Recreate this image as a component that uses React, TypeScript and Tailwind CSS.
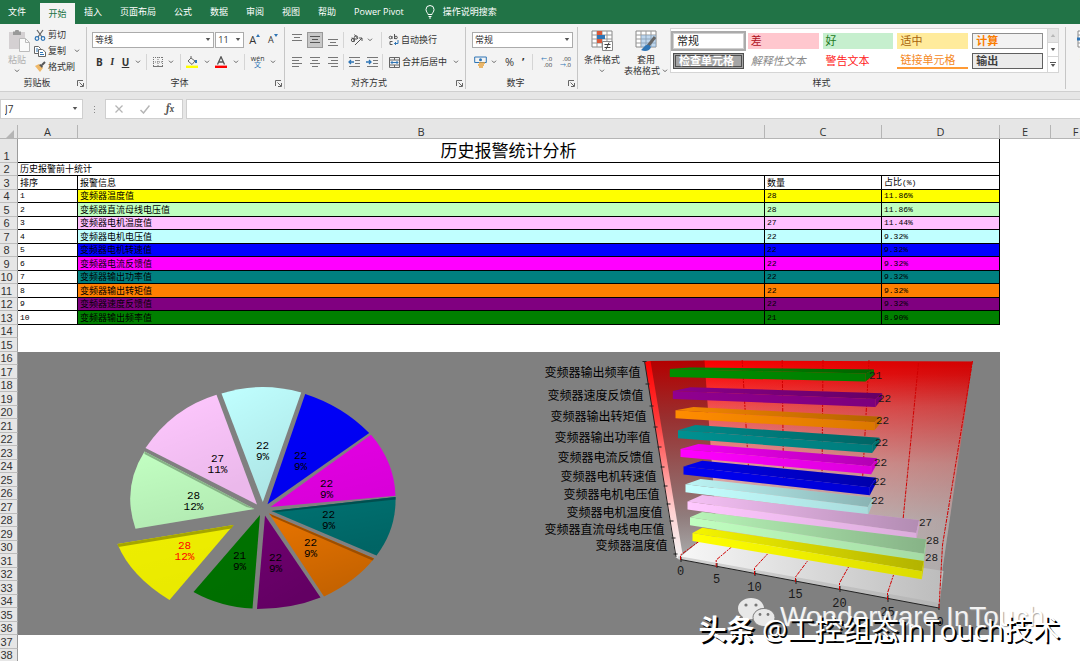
import { ReactNode } from "react";
import clsx from "clsx";

type AlarmRow = {
  name: string;
  count: number;
  ratio: string;
  bg: string;
};

const ALARMS: AlarmRow[] = [
  { name: "变频器温度值", count: 28, ratio: "11.86%", bg: "bg-[#ffff00]" },
  { name: "变频器直流母线电压值", count: 28, ratio: "11.86%", bg: "bg-[#c0ffc0]" },
  { name: "变频器电机温度值", count: 27, ratio: "11.44%", bg: "bg-[#ffc0ff]" },
  { name: "变频器电机电压值", count: 22, ratio: "9.32%", bg: "bg-[#c0ffff]" },
  { name: "变频器电机转速值", count: 22, ratio: "9.32%", bg: "bg-[#0000ff]" },
  { name: "变频器电流反馈值", count: 22, ratio: "9.32%", bg: "bg-[#ff00ff]" },
  { name: "变频器输出功率值", count: 22, ratio: "9.32%", bg: "bg-[#008080]" },
  { name: "变频器输出转矩值", count: 22, ratio: "9.32%", bg: "bg-[#ff8000]" },
  { name: "变频器速度反馈值", count: 22, ratio: "9.32%", bg: "bg-[#800080]" },
  { name: "变频器输出频率值", count: 21, ratio: "8.90%", bg: "bg-[#008000]" },
];

const TABS = ["插入", "页面布局", "公式", "数据", "审阅", "视图", "帮助", "Power Pivot"];

const CELL_STYLES = [
  { label: "常规", className: "bg-white text-[#222] outline-2 outline-[#ababab] border border-[#d0d0d0]" },
  { label: "差", className: "bg-[#ffc7ce] text-[#b0101c]" },
  { label: "好", className: "bg-[#c6efce] text-[#1e7b1e]" },
  { label: "适中", className: "bg-[#ffeb9c] text-[#a8640c]" },
  { label: "计算", className: "bg-[#f2f2f2] text-[#fa7d00] font-bold border border-[#8f8f8f]" },
  { label: "检查单元格", className: "bg-[#a5a5a5] text-white font-bold border-3 border-double border-[#4f4f4f]" },
  { label: "解释性文本", className: "text-[#8a8a8a] italic" },
  { label: "警告文本", className: "text-[#ff2020]" },
  { label: "链接单元格", className: "text-[#f58a1f] border-b-2 border-[#ff9a35]" },
  { label: "输出", className: "bg-[#ebebeb] text-[#3f3f3f] font-bold border border-[#5f5f5f]" },
];

function Chevron() {
  return (
    <svg viewBox="0 0 6 4" className="h-1 w-1.5 shrink-0" fill="none" stroke="#666">
      <path d="M1 .7 3 2.7 5 .7" />
    </svg>
  );
}

function Caret({ className }: { className?: string }) {
  return (
    <svg viewBox="0 0 6 4" className={clsx("h-[3px] w-1.5", className)} fill="#555">
      <path d="M0 0h6L3 4z" />
    </svg>
  );
}

function Divider() {
  return <span className="h-4 w-px shrink-0 bg-[#d5d5d5]" />;
}

function SelectBox({ label, value, className }: { label: string; value: string; className: string }) {
  return (
    <div className={clsx("relative h-4 border border-[#ababab] bg-white", className)}>
      <select aria-label={label} className="block h-full w-full appearance-none pl-0.5 text-[9px] leading-[14px] text-[#333]">
        <option>{value}</option>
      </select>
      <Caret className="pointer-events-none absolute top-[5px] right-0.5" />
    </div>
  );
}

function RibbonGroup({
  title,
  launcher = true,
  className,
  children,
}: {
  title: string;
  launcher?: boolean;
  className?: string;
  children: ReactNode;
}) {
  return (
    <section className={clsx("flex h-[62px] flex-col border-r border-[#c6c6c6]", className)}>
      <div className="h-[50px] grow">{children}</div>
      <div className={clsx("relative h-3 text-center text-[9px] leading-3", launcher && "pr-3")}>
        {title}
        {launcher && (
          <button aria-label={title + "设置"} className="absolute right-0.5 bottom-0.5">
            <svg viewBox="0 0 7 7" className="size-[7px]" fill="none" stroke="#666">
              <path d="M.5 6V.5H6M2.500 2.500 6 6M6.500 3v3.500H3" />
            </svg>
          </button>
        )}
      </div>
    </section>
  );
}

/** Horizontal lines used by the alignment buttons, as [x1, x2] pairs. */
function LinesIcon({ lines, top = 1, color = "#777" }: { lines: number[][]; top?: number; color?: string }) {
  return (
    <svg viewBox="0 0 12 12" className="size-3" stroke={color}>
      {lines.map(([a, b], i) => (
        <path key={i} d={`M${a} ${top + i * 3 + 0.5}H${b}`} />
      ))}
    </svg>
  );
}

function IndentIcon({ right }: { right?: boolean }) {
  return (
    <svg viewBox="0 0 12 12" className="size-3" fill="none" stroke="#777">
      <path d="M1 1.500h11M7 4.500h5M7 7.500h5M1 10.500h11" />
      <path d={right ? "M0 6h5M3 4l2 2-2 2" : "M6 6H1M3 4 1 6l2 2"} stroke="#2e75b6" strokeWidth="1.300" />
    </svg>
  );
}

function ClipboardGroup() {
  return (
    <RibbonGroup title="剪贴板" className="w-[87px]">
      <div className="flex">
        <button className="flex w-[34px] flex-col items-center pt-[3px] text-[9px] leading-[11px] text-[#b0b0b0]">
          <svg viewBox="0 0 22 22" className="ml-1 size-[22px]">
            <path d="M1 2h16v17H1z" fill="#d4d0d2" />
            <path d="M5 1.500h2a2 2 0 0 1 4 0h2V5H5z" fill="#999" />
            <path d="M11.500 8.500h6l4 4v9h-10z" fill="#fafafa" stroke="#bbb" />
            <path d="M17.500 8.500v4h4" fill="none" stroke="#bbb" />
          </svg>
          <span className="pt-0.5 pb-1">粘贴</span>
          <Chevron />
        </button>
        <div className="flex flex-col text-[9px] leading-4">
          <button className="flex items-center gap-0.5">
            <svg viewBox="0 0 12 12" className="size-3" fill="none" stroke="#666" strokeWidth="1.200">
              <path d="M3 1l5 7M9 1 4 8" />
              <circle cx="3" cy="9.500" r="1.800" stroke="#2e75b6" />
              <circle cx="9" cy="9.500" r="1.800" stroke="#2e75b6" />
            </svg>
            剪切
          </button>
          <button className="flex items-center gap-0.5">
            <svg viewBox="0 0 12 12" className="size-3" fill="#fff" stroke="#666">
              <path d="M.5 1.500h4l2 2v5h-6z" />
              <path d="M4.500 4.500h4l3 2.500v4.500h-7z" />
              <path d="M6 7.500h3M6 9.500h4M2 4h2M2 6h2" stroke="#2e75b6" />
            </svg>
            复制
            <span className="pl-1.5">
              <Chevron />
            </span>
          </button>
          <button className="flex items-center gap-0.5">
            <svg viewBox="0 0 12 12" className="size-3">
              <path d="M1 5l4-2 4 4-3 4z" fill="#efb868" />
              <path d="M5 4l2-1 2 2-1 2z" fill="#555" />
              <path d="M8 4l3-3" stroke="#555" strokeWidth="2" />
            </svg>
            格式刷
          </button>
        </div>
      </div>
    </RibbonGroup>
  );
}

function FontGroup() {
  return (
    <RibbonGroup title="字体" className="w-[198px]">
      <div className="flex flex-col gap-1.5 pt-[5px] pl-[5px]">
        <div className="flex items-center gap-px">
          <SelectBox label="字体" value="等线" className="w-[123px]" />
          <SelectBox label="字号" value="11" className="w-[29px]" />
          <button aria-label="增大字号" className="ml-1 flex w-4 text-[11px] leading-4">
            A
            <svg viewBox="0 0 4 3" className="mt-0.5 h-[3px] w-1" fill="#2e75b6">
              <path d="M0 3h4L2 0z" />
            </svg>
          </button>
          <button aria-label="减小字号" className="ml-0.5 flex w-4 text-[9px] leading-4">
            A
            <svg viewBox="0 0 4 3" className="mt-0.5 h-[3px] w-1" fill="#2e75b6">
              <path d="M0 0h4L2 3z" />
            </svg>
          </button>
        </div>
        <div className="flex h-4 items-center justify-between pr-2 pl-1 text-[10px]">
          <button className="font-bold">B</button>
          <button className="w-2 font-serif font-bold italic">I</button>
          <button className="font-bold underline">U</button>
          <Chevron />
          <Divider />
          <button aria-label="边框">
            <svg viewBox="0 0 10 10" className="size-2.5" fill="none" stroke="#777">
              <path d="M.5 0v10M5 0v10M9.500 0v10M0 .5h10M0 5h10" strokeDasharray="1 1" />
              <path d="M0 9.500h10" />
            </svg>
          </button>
          <Chevron />
          <Divider />
          <button aria-label="填充颜色">
            <svg viewBox="0 0 12 12" className="size-3" fill="none" stroke="#666">
              <path d="M2 5l3-3 4 3-3 3.500zM5 2V0" />
              <path d="M10 4v3" stroke="#2e75b6" strokeWidth="2" />
              <path d="M0 10.800h12" stroke="#ff0" strokeWidth="2.400" />
            </svg>
          </button>
          <Chevron />
          <button aria-label="字体颜色">
            <svg viewBox="0 0 12 12" className="size-3" fill="none" stroke="#555">
              <path d="M2.500 8.500 6 .8l3.500 7.700M4 6h4" strokeWidth="1.300" />
              <path d="M0 10.800h12" stroke="#f00" strokeWidth="2.400" />
            </svg>
          </button>
          <Chevron />
          <Divider />
          <button className="flex flex-col items-center text-[7px] leading-[6px]">
            wén
            <span className="text-[#2e75b6]">文</span>
          </button>
          <Chevron />
        </div>
      </div>
    </RibbonGroup>
  );
}

function AlignGroup() {
  const buttons = "grid size-4 place-items-center";
  return (
    <RibbonGroup title="对齐方式" className="w-[181px]">
      <div className="flex flex-col gap-1.5 pt-[5px] pl-1 text-[9px]">
        <div className="flex h-4 items-center gap-0.5">
          <button aria-label="顶端对齐" className={buttons}>
            <LinesIcon top={0} lines={[[1, 11], [3, 9], [1, 11]]} />
          </button>
          <button aria-label="垂直居中" className={clsx(buttons, "border border-[#999] bg-[#c8c8c8]")}>
            <LinesIcon top={2} lines={[[1, 11], [3, 9], [1, 11]]} color="#555" />
          </button>
          <button aria-label="底端对齐" className={buttons}>
            <LinesIcon top={5} lines={[[1, 11], [3, 9], [1, 11]]} />
          </button>
          <Divider />
          <button aria-label="方向" className="ml-1 flex items-center gap-1">
            <svg viewBox="0 0 13 12" className="h-3 w-[13px]" fill="none" stroke="#555">
              <circle cx="3" cy="6" r="1.700" />
              <circle cx="6" cy="3.500" r="1.700" />
              <path d="M4.500 7.500 2 3.500M8 5 4.500.5M5 11l7-7M12 7V4H9" />
            </svg>
            <Chevron />
          </button>
          <span className="ml-1.5 h-4 w-px bg-[#d5d5d5]" />
          <button className="ml-1 flex items-center gap-0.5">
            <svg viewBox="0 0 10 12" className="h-3 w-[11px]" fill="none" stroke="#555">
              <circle cx="2" cy="3.500" r="1.300" />
              <path d="M3.500 2v3M6 0v5M4 7.500H1.500v3H4" />
              <circle cx="7.500" cy="3.500" r="1.300" />
              <path d="M9.500 6v3.500H6M7.500 8 6 9.500 7.500 11" stroke="#2e75b6" />
            </svg>
            自动换行
          </button>
        </div>
        <div className="flex h-4 items-center gap-0.5">
          <button aria-label="左对齐" className={buttons}>
            <LinesIcon lines={[[1, 11], [1, 8], [1, 11], [1, 8]]} />
          </button>
          <button aria-label="居中" className={buttons}>
            <LinesIcon lines={[[1, 11], [3, 9], [1, 11], [3, 9]]} />
          </button>
          <button aria-label="右对齐" className={buttons}>
            <LinesIcon lines={[[1, 11], [4, 11], [1, 11], [4, 11]]} />
          </button>
          <Divider />
          <button aria-label="减少缩进量" className={buttons}>
            <IndentIcon />
          </button>
          <button aria-label="增加缩进量" className={buttons}>
            <IndentIcon right />
          </button>
          <Divider />
          <button className="ml-1 flex items-center gap-0.5">
            <svg viewBox="0 0 11 11" className="size-[11px]" fill="none" stroke="#666">
              <path d="M.5.5h10v10H.5zM0 3h11M0 8h11M5.500 0v3M5.500 8v3" />
              <path d="M2 5.500h7M3.500 4 2 5.500 3.500 7M7.500 4 9 5.500 7.500 7" stroke="#2e75b6" />
            </svg>
            合并后居中
            <span className="pl-1">
              <Chevron />
            </span>
          </button>
        </div>
      </div>
    </RibbonGroup>
  );
}

function NumberGroup() {
  return (
    <RibbonGroup title="数字" className="w-[112px]">
      <div className="flex flex-col gap-1.5 pt-[5px] pr-1 pl-1.5">
        <SelectBox label="数字格式" value="常规" className="w-full" />
        <div className="flex h-4 items-center justify-between px-0.5">
          <button aria-label="会计数字格式" className="flex items-center gap-1">
            <svg viewBox="0 0 13 12" className="h-3 w-[13px]" fill="none">
              <path d="M.7 1h11.600v5.500H.7z" stroke="#2e75b6" />
              <circle cx="6.500" cy="3.700" r="1.500" fill="#2e75b6" />
              <path d="M5 7h6M4 9h6M5 11h4" stroke="#e8a33d" strokeWidth="1.600" />
            </svg>
            <Chevron />
          </button>
          <button className="text-[11px]">%</button>
          <button className="text-[11px] font-bold">’</button>
          <Divider />
          <button className="flex flex-col text-right text-[6px] leading-[6px]">
            <span>
              <span className="text-[#2e75b6]">←</span>.0
            </span>
            <span>.00</span>
          </button>
          <button className="flex flex-col text-right text-[6px] leading-[6px]">
            <span>.00</span>
            <span>
              <span className="text-[#2e75b6]">→</span>.0
            </span>
          </button>
        </div>
      </div>
    </RibbonGroup>
  );
}

function GridIconBase() {
  return (
    <>
      <path d="M1 1h20v16H1z" fill="#fff" stroke="#888" />
      <path d="M1 5h20M1 9h20M1 13h20M6 1v16M11 1v16M16 1v16" fill="none" stroke="#999" />
    </>
  );
}

function StylesGroup() {
  return (
    <RibbonGroup title="样式" launcher={false} className="grow">
      <div className="flex">
        <button className="flex w-12 shrink-0 flex-col items-center pt-[3px] text-[9px] leading-[11px]">
          <svg viewBox="0 0 22 22" className="size-[22px]">
            <GridIconBase />
            <path d="M6 1h5v4H6zM6 9h5v4H6z" fill="#d9593a" />
            <path d="M6 5h8v4H6z" fill="#2e75b6" />
            <path d="M11.500 11.500h10v9h-10z" fill="#fff" stroke="#888" />
            <path d="M13.500 14.500h6M13.500 17.500h6M18 12.500l-3 7" stroke="#444" />
          </svg>
          <span className="pt-0.5 pb-1">条件格式</span>
          <Chevron />
        </button>
        <button className="flex w-10 shrink-0 flex-col items-center pt-[3px] text-[9px] leading-[11px]">
          <svg viewBox="0 0 22 22" className="size-[22px]">
            <GridIconBase />
            <path d="M6 5h15v12H6z" fill="#7fb0dd" opacity=".5" />
            <path d="M20 7l-7 9" stroke="#666" strokeWidth="3" />
            <path d="M14 15c-4-1-5 3-8 5 4 2 9 1 10-3z" fill="#2e75b6" />
          </svg>
          <span className="pt-0.5">套用</span>
          <span className="flex items-center gap-0.5 whitespace-nowrap">
            表格格式
            <Chevron />
          </span>
        </button>
        <div className="mt-px mr-1.5 ml-1 flex h-[45px] grow border border-[#d5d5d5] bg-white">
          <div className="grid grow grid-cols-5 gap-x-1 gap-y-1 px-0.5 py-1 pr-1">
            {CELL_STYLES.map((s) => (
              <button
                key={s.label}
                className={clsx("flex h-4 items-center pl-[3px] text-left text-[11px] leading-[14px]", s.className)}
              >
                {s.label}
              </button>
            ))}
          </div>
          <div className="flex w-[11px] flex-col divide-y divide-[#d5d5d5] border-l border-[#d5d5d5]">
            <button aria-label="上一行" className="grid grow place-items-center bg-[#e4e4e4]">
              <Caret className="w-1 rotate-180 opacity-30" />
            </button>
            <button aria-label="下一行" className="grid grow place-items-center">
              <Caret className="w-1" />
            </button>
            <button aria-label="其他" className="flex grow flex-col items-center justify-center gap-px">
              <span className="h-px w-1.5 bg-[#555]" />
              <Caret className="w-1.5" />
            </button>
          </div>
        </div>
      </div>
    </RibbonGroup>
  );
}

function Ribbon() {
  return (
    <header>
      <nav className="flex h-6 items-stretch bg-[#217346] text-[9px] leading-6 text-white">
        <button className="w-10 pl-2 text-left">文件</button>
        <button className="mt-[3px] w-[35px] bg-[#f3f3f3] leading-[21px] text-[#217346]">开始</button>
        {TABS.map((tab) => (
          <button key={tab} className="px-[9px]">
            {tab}
          </button>
        ))}
        <button className="flex items-center gap-2 pl-3">
          <svg viewBox="0 0 10 14" className="h-3.5 w-2.5" fill="none" stroke="#fff">
            <path d="M3 9.500C3 8 1 7 1 4.500a4 4 0 0 1 8 0C9 7 7 8 7 9.500zM3.500 11.500h3M4 13h2" />
          </svg>
          操作说明搜索
        </button>
      </nav>
      <div className="flex h-[68px] border-b border-[#cfcfcf] bg-[#f3f3f3] pt-[3px]">
        <ClipboardGroup />
        <FontGroup />
        <AlignGroup />
        <NumberGroup />
        <StylesGroup />
        <div className="w-3.5 overflow-hidden pt-[3px]">
          <button className="ml-[11px] block w-6">
            <svg viewBox="0 0 22 22" className="size-[22px]">
              <GridIconBase />
              <path d="M0 9h6" stroke="#2e75b6" strokeWidth="3" />
            </svg>
            <span className="block text-[9px] leading-[13px]">插入</span>
          </button>
        </div>
      </div>
    </header>
  );
}

function FormulaBar() {
  return (
    <div className="flex h-[33px] items-start pt-[7px]">
      <div className="relative h-5 w-[83px] border border-[#cfcfcf] bg-white">
        <input aria-label="名称框" defaultValue="J7" className="block h-full w-full pl-1 text-[10px]" />
        <Caret className="absolute top-[7px] right-1" />
      </div>
      <div className="flex h-5 w-[22px] flex-col items-center justify-center gap-0.5">
        <span className="size-px bg-[#888]" />
        <span className="size-px bg-[#888]" />
        <span className="size-px bg-[#888]" />
      </div>
      <div className="flex h-5 w-[78px] items-center justify-between border border-[#cfcfcf] bg-white px-2">
        <button aria-label="取消">
          <svg viewBox="0 0 10 10" className="size-2.5" stroke="#b5b5b5" strokeWidth="1.300">
            <path d="M1.500 1.500l7 7M8.500 1.500l-7 7" />
          </svg>
        </button>
        <button aria-label="输入">
          <svg viewBox="0 0 10 10" className="size-2.5" fill="none" stroke="#b5b5b5" strokeWidth="1.500">
            <path d="M.5 6l3 3L9.500 1.500" />
          </svg>
        </button>
        <button className="font-serif text-[11px] leading-4 font-bold text-[#555] italic">
          f<span className="text-[9px]">x</span>
        </button>
      </div>
      <input aria-label="编辑栏" className="ml-[3px] h-5 grow border border-r-0 border-[#cfcfcf] bg-white px-1 text-[9px]" />
    </div>
  );
}

const PIE_SLICES = [
  { d: "M262.300 502 221 393.500Q260 381 300.700 392.500Z", fill: "#c0ffff", shade: 0.1, label: "22", pct: "9%", x: 262, y: 449 },
  { d: "M267 504.300 304.700 394Q342 406 368.700 433Z", fill: "#0000fa", shade: 0.05, label: "22", pct: "9%", x: 300, y: 459 },
  { d: "M270 507 370.500 434.700Q394 462 395 495.700Z", fill: "#e400e4", shade: 0.05, label: "22", pct: "9%", x: 326, y: 487 },
  { d: "M271 511 395 497Q396 529 376 555.500Z", fill: "#007272", shade: 0.12, label: "22", pct: "9%", x: 328, y: 518 },
  { d: "M268.500 513.500 373.500 558.500Q356 581 323.500 596.500Z", fill: "#e87400", shade: 0.15, label: "22", pct: "9%", x: 310, y: 546 },
  { d: "M264.500 515.500 320 597.500Q291 609 256.500 609Z", fill: "#700070", shade: 0.12, label: "22", pct: "9%", x: 275, y: 561 },
  { d: "M259.500 515 252 608.500Q220 607 193 592Z", fill: "#007400", shade: 0.05, label: "21", pct: "9%", x: 239, y: 559 },
  { d: "M233 525 117 544Q130 576 169 600Z", fill: "#eeee00", shade: 0.02, label: "28", pct: "12%", x: 184, y: 549 },
  { d: "M254 509 144 451.500Q121 488 135 528.700Z", fill: "#c2ffc2", shade: 0.08, label: "28", pct: "12%", x: 193, y: 499 },
  { d: "M256.500 504.500 216 394.700Q172 408 145 448Z", fill: "#ffc8ff", shade: 0.08, label: "27", pct: "11%", x: 217, y: 462 },
];

// Sides of the slices that face the viewer.
const PIE_EDGES = [
  { d: "M144 451.500 254 509 246 507 144 454Z", fill: "#86b286" },
  { d: "M117 544 233 525 231 528.500 118 547Z", fill: "#a5a500" },
  { d: "M271 511 395 497V499.500L277 512Z", fill: "#004f4f" },
  { d: "M268.500 513.500 373.500 558.500 372 560.500 272 517Z", fill: "#9c4e00" },
];

function PieChart() {
  return (
    <svg viewBox="18 352 490 283" className="h-[283px] min-w-0 flex-1" role="img" aria-label="报警占比饼图">
      <defs>
        <linearGradient id="pieShade" x1="0" y1="0" x2="0.4" y2="1">
          <stop offset="0" stopOpacity="0" />
          <stop offset="1" stopOpacity="1" />
        </linearGradient>
      </defs>
      {PIE_SLICES.map((s) => (
        <g key={s.d}>
          <path d={s.d} fill={s.fill} />
          <path d={s.d} fill="url(#pieShade)" opacity={s.shade} />
        </g>
      ))}
      {PIE_EDGES.map((e) => (
        <path key={e.d} d={e.d} fill={e.fill} />
      ))}
      <g className="font-['Liberation_Mono',monospace] text-[11px]" textAnchor="middle">
        {PIE_SLICES.map((s) => (
          <g key={s.d} fill={s.x === 184 ? "#ff0000" : "#000"}>
            <text x={s.x} y={s.y}>{s.label}</text>
            <text x={s.x} y={s.y + 11}>{s.pct}</text>
          </g>
        ))}
      </g>
    </svg>
  );
}

// left: x and top of the front face; back: far left corner of the top face;
// end: far right corner; front: lower right corner of the front face.
const BARS = [
  { name: "变频器输出频率值", tx: 640, ty: 377, color: "#009000", left: [669.3, 369], back: [690, 367.5], end: [873.5, 369.5], front: [865, 381.5], value: 21, vx: 875, vy: 379 },
  { name: "变频器速度反馈值", tx: 643, ty: 400, color: "#900090", left: [672.3, 391], back: [690, 387.3], end: [881.7, 393.3], front: [875, 407], value: 22, vx: 884, vy: 402 },
  { name: "变频器输出转矩值", tx: 646, ty: 421, color: "#ff8c00", left: [675, 410.3], back: [693, 407], end: [881, 416.7], front: [874, 430.3], value: 22, vx: 882, vy: 424 },
  { name: "变频器输出功率值", tx: 650, ty: 442, color: "#009090", left: [677.5, 430.3], back: [695, 425], end: [879, 437.7], front: [871.7, 453], value: 22, vx: 881, vy: 446 },
  { name: "变频器电流反馈值", tx: 653, ty: 462, color: "#ff00ff", left: [680, 449], back: [698, 444], end: [876.7, 458.3], front: [870.7, 474.3], value: 22, vx: 880, vy: 466 },
  { name: "变频器电机转速值", tx: 656, ty: 481, color: "#0000f4", left: [683, 466.5], back: [701.7, 460.7], end: [875.7, 477.7], front: [869.3, 495.3], value: 22, vx: 879, vy: 485 },
  { name: "变频器电机电压值", tx: 659, ty: 499, color: "#c4ffff", left: [685, 484.3], back: [700, 479], end: [872.7, 497.7], front: [867.3, 515], value: 22, vx: 877, vy: 504 },
  { name: "变频器电机温度值", tx: 662, ty: 517, color: "#ffc8ff", left: [687, 501.5], back: [701.7, 495], end: [918.7, 520], front: [915.7, 541], value: 27, vx: 925, vy: 526 },
  { name: "变频器直流母线电压值", tx: 664, ty: 534, color: "#c0ffc0", left: [689.5, 517.3], back: [701.7, 512], end: [925.7, 539.3], front: [923.3, 561.7], value: 28, vx: 932, vy: 544 },
  { name: "变频器温度值", tx: 667, ty: 550, color: "#ffff00", left: [692, 533], back: [701.7, 527.7], end: [923.3, 561], front: [921.3, 579.3], value: 28, vx: 931, vy: 561 },
];

const AXIS_TICKS = [
  { value: 0, x: 680, y: 575 },
  { value: 5, x: 716, y: 583 },
  { value: 10, x: 754, y: 591 },
  { value: 15, x: 795, y: 598 },
  { value: 20, x: 839, y: 607 },
  { value: 25, x: 887, y: 616 },
  { value: 30, x: 936, y: 626 },
];

const GRID_LINES = [
  "M741.700 360 748 468",
  "M781.700 360 783 478",
  "M822.500 360 821.500 478",
  "M868.500 360 862 480",
  "M918 363 902.500 520",
  "M972 361 942 545 938.500 608",
  "M680 560V555L699 541",
  "M715.700 567V560L731 547",
  "M754 575V568L767 554",
  "M795 582V577L807 561",
  "M839 590V583L848 567",
  "M887 600V593L893 575",
];

function Bar3D({ bar }: { bar: (typeof BARS)[number] }) {
  const [lx, ly] = bar.left;
  const [bx, by] = bar.back;
  const [ex, ey] = bar.end;
  const [fx, fy] = bar.front;
  const top = `M${lx} ${ly}L${bx} ${by}L${ex} ${ey}L${fx} ${fy - 8}Z`;
  const side = `M${fx} ${fy - 8}L${ex} ${ey}V${ey + 5}L${fx} ${fy}Z`;
  const face = `M${lx} ${ly}L${fx} ${fy - 8}V${fy}L${lx} ${ly + 8}Z`;
  return (
    <g>
      <path d={top} fill={bar.color} />
      <path d={top} fill="url(#barTop)" />
      <path d={side} fill={bar.color} />
      <path d={side} fillOpacity=".2" />
      <path d={face} fill={bar.color} />
      <path d={face} fill="url(#barFace)" />
    </g>
  );
}

function BarChart() {
  return (
    <svg viewBox="509 352 490 283" className="h-[283px] min-w-0 flex-1" role="img" aria-label="报警次数条形图">
      <defs>
        <linearGradient id="barTop">
          <stop offset="0" stopOpacity=".04" />
          <stop offset="1" stopOpacity=".3" />
        </linearGradient>
        <linearGradient id="barFace">
          <stop offset="0" stopOpacity="0" />
          <stop offset="1" stopOpacity=".14" />
        </linearGradient>
        <linearGradient id="wallEdge" x1="0" y1="0" x2="0" y2="1">
          <stop offset="0" stopColor="#ff0000" />
          <stop offset=".3" stopColor="#ff3a3a" />
          <stop offset=".75" stopColor="#ffd0d0" />
          <stop offset="1" stopColor="#f4f4f4" />
        </linearGradient>
        <linearGradient id="wallSide" x1="0" y1="0" x2="0" y2="1">
          <stop offset="0" stopColor="#b40000" />
          <stop offset=".3" stopColor="#983030" />
          <stop offset=".8" stopColor="#907c7c" />
          <stop offset="1" stopColor="#a8a8a8" />
        </linearGradient>
        <linearGradient id="wallBack" x1="0" y1="0" x2="0" y2="1">
          <stop offset="0" stopColor="#fa0000" />
          <stop offset=".06" stopColor="#fa1010" />
          <stop offset=".2" stopColor="#f25050" />
          <stop offset=".45" stopColor="#e29a98" />
          <stop offset=".7" stopColor="#d0c0c0" />
          <stop offset="1" stopColor="#cacaca" />
        </linearGradient>
        <linearGradient id="wallShade">
          <stop offset="0" stopOpacity="0" />
          <stop offset="1" stopOpacity=".16" />
        </linearGradient>
        <linearGradient id="floor">
          <stop offset="0" stopColor="#f8f8f8" />
          <stop offset="1" stopColor="#bcbcbc" />
        </linearGradient>
      </defs>
      <path d="M703 360.500 972 361.500 939 590 712 560Z" fill="url(#wallBack)" />
      <path d="M703 360.500 972 361.500 939 590 712 560Z" fill="url(#wallShade)" />
      <path d="M649 361 704 360.500 717 543 698 542 680 555Z" fill="url(#wallSide)" />
      <path d="M644 361.500 650 361 682 554 678 559 675 557Z" fill="url(#wallEdge)" />
      <path d="M677 559 699 541 760 543 943 571 938.500 608Z" fill="url(#floor)" />
      <path d="M678 556 938.500 603V608L677 559Z" fill="#aaa" fillOpacity=".45" />
      <path d="M644 361 675.500 557M680 559.500 938.500 608M642 361.500h4M645 384h4M649 406h4M653 427h4M657 447h4M660 467h4M663 486h4M666 504h4M669 521h4M671 538h4M673 554h4M680.500 557v5M716.500 563v5M754.500 571v5M795.500 579v5M839.500 586v6M887.500 595v7M938.500 604v6" fill="none" stroke="#222" />
      <g fill="none" stroke="#d00000" strokeDasharray="4 1 2 1">
        {GRID_LINES.map((d) => (
          <path key={d} d={d} />
        ))}
      </g>
      {BARS.map((bar) => (
        <Bar3D key={bar.name} bar={bar} />
      ))}
      <g className="text-[12px]" textAnchor="end">
        {BARS.map((bar) => (
          <text key={bar.name} x={bar.tx} y={bar.ty}>{bar.name}</text>
        ))}
      </g>
      <g className="font-['Liberation_Mono',monospace]" fill="#1a1a1a" textAnchor="middle">
        {BARS.map((bar) => (
          <text key={bar.name} x={bar.vx} y={bar.vy} className="text-[11px]">{bar.value}</text>
        ))}
        {AXIS_TICKS.map((t) => (
          <text key={t.value} x={t.x} y={t.y} className="text-[12px]">{t.value}</text>
        ))}
      </g>
    </svg>
  );
}

function RowHead({ n }: { n: number }) {
  return (
    <th
      scope="row"
      className={clsx(
        "overflow-hidden border-r border-b border-r-[#9b9b9b] border-b-[#bdbdbd] bg-[#e6e6e6] pr-1 text-center align-bottom font-['Liberation_Sans',sans-serif] text-[11px] leading-3 font-normal text-[#333]",
        n === 1 ? "h-[24px]" : n % 2 === 0 ? "h-[13px]" : "h-[14px]"
      )}
    >
      {n}
    </th>
  );
}

function Sheet() {
  const cell = "overflow-hidden border-r border-b border-black pl-0.5 text-left leading-3 font-normal whitespace-nowrap";
  const words = "text-[9px]";
  const digits = "font-['Liberation_Mono','Noto_Sans_CJK_SC',monospace] text-[8px]";
  const colHead = "border-r border-[#b5b5b5] border-b h-[14px] text-[11px] leading-[13px] font-normal text-[#333] bg-[#e6e6e6]";

  return (
    <table className="w-full table-fixed border-separate border-spacing-0 bg-white">
      <colgroup>
        <col className="w-[18px]" />
        <col className="w-[60px]" />
        <col />
        <col className="w-[117px]" />
        <col className="w-[118px]" />
        <col className="w-[51px]" />
        <col className="w-[29px]" />
      </colgroup>
      <thead>
        <tr>
          <th aria-label="全选" className={colHead}>
            <svg viewBox="0 0 8 8" className="mt-1 ml-1.5 size-2" fill="#b5b5b5">
              <path d="M8 0v8H0z" />
            </svg>
          </th>
          <th className={colHead}>A</th>
          <th className={colHead}>B</th>
          <th className={colHead}>C</th>
          <th className={colHead}>D</th>
          <th className={colHead}>E</th>
          <th className={clsx(colHead, "border-r-0 pl-5")}>F</th>
        </tr>
      </thead>
      <tbody>
        <tr>
          <RowHead n={1} />
          <td colSpan={4} className="border-r border-b border-black text-center text-[17px] leading-[22px]">
            历史报警统计分析
          </td>
        </tr>
        <tr>
          <RowHead n={2} />
          <td colSpan={4} className={clsx(cell, words)}>历史报警前十统计</td>
        </tr>
        <tr>
          <RowHead n={3} />
          <td className={clsx(cell, words)}>排序</td>
          <td className={clsx(cell, words)}>报警信息</td>
          <td className={clsx(cell, words)}>数量</td>
          <td className={clsx(cell, words)}>
            占比<span className={digits}>(%)</span>
          </td>
        </tr>
        {ALARMS.map((row, i) => (
          <tr key={row.name}>
            <RowHead n={i + 4} />
            <td className={clsx(cell, digits)}>{i + 1}</td>
            <td className={clsx(cell, words, row.bg)}>{row.name}</td>
            <td className={clsx(cell, digits, row.bg)}>{row.count}</td>
            <td className={clsx(cell, digits, row.bg)}>{row.ratio}</td>
          </tr>
        ))}
        <tr>
          <RowHead n={14} />
        </tr>
        <tr>
          <RowHead n={15} />
        </tr>
        {Array.from({ length: 23 }, (_, i) => i + 16).map((n) => (
          <tr key={n}>
            <RowHead n={n} />
            {n === 16 && (
              <td colSpan={4} rowSpan={21} className="bg-[#808080] p-0 align-top">
                <div className="flex">
                  <PieChart />
                  <BarChart />
                </div>
              </td>
            )}
          </tr>
        ))}
      </tbody>
    </table>
  );
}

function Watermark() {
  return (
    <div className="pointer-events-none absolute right-5 bottom-4 text-[28px] leading-8 whitespace-nowrap text-white">
      <div className="absolute right-4 bottom-2 flex items-center gap-1 font-['Liberation_Sans',sans-serif] opacity-90 [text-shadow:1px_1px_1px_#9a9a9a]">
        <svg viewBox="0 0 38 32" className="mb-2 h-8 w-[38px]">
          <path d="M13 1C6 1 0 5.500 0 11.500c0 3.500 2 6.500 5 8.500l-1 4 4.500-2.500c2 .6 4 .8 6.500.6 0-7 5-11 11-11C25.500 5 20 1 13 1z" fill="#f4f4f4" />
          <path d="M26 11.500c-6 0-11 4-11 9s5 9 11 9c1.500 0 3-.2 4-.6l4 2-1-3.500c2.500-1.700 4-4 4-6.900 0-5-5-9-11-9z" fill="#f4f4f4" stroke="#808080" />
          <g fill="#777">
            <circle cx="8" cy="8" r="1.600" />
            <circle cx="18" cy="8" r="1.600" />
            <circle cx="22" cy="17.500" r="1.400" />
            <circle cx="30" cy="17.500" r="1.400" />
          </g>
        </svg>
        Wonderware InTouch
      </div>
      <div className="relative [text-shadow:2px_2px_0_#000]">
        <b>头条</b> @工控组态InTouch技术
      </div>
    </div>
  );
}

export default function App() {
  return (
    <div className="relative h-screen overflow-hidden bg-[#e6e6e6] font-['Open_Sans','Noto_Sans_CJK_SC',sans-serif] text-[#333]">
      <Ribbon />
      <FormulaBar />
      <main className="text-black">
        <Sheet />
      </main>
      <Watermark />
    </div>
  );
}
